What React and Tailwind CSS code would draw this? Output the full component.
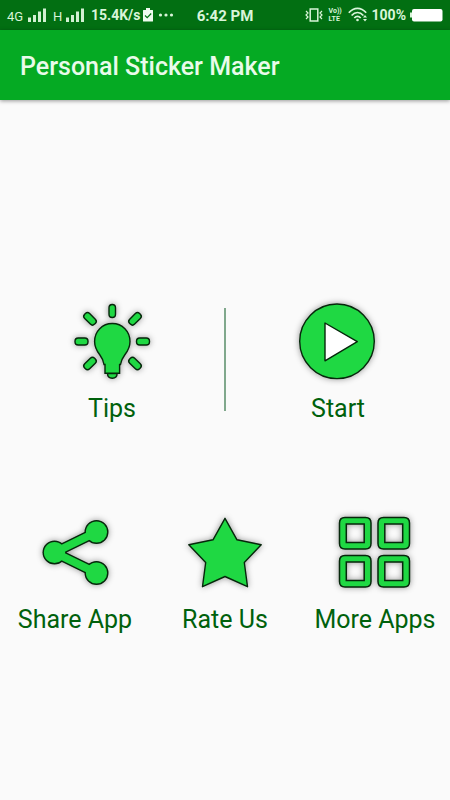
function SignalBars() {
  return (
    <svg className="h-4 w-5" viewBox="0 0 20 16" fill="#d2f0d2">
      <rect x="1" y="10.500" width="3" height="4.500" />
      <rect x="6" y="8" width="3" height="7" />
      <rect x="11" y="4.500" width="3" height="10.500" />
      <rect x="16" y="1.500" width="3" height="13.500" />
    </svg>
  );
}

function StatusBar() {
  return (
    <div className="grid h-[30px] grid-cols-[1fr_auto_1fr] items-center bg-[#026f12] px-[7px] text-[#d9f5d9]">
      <div className="flex items-center">
        <span className="mt-1 w-5 text-[13px] leading-4">4G</span>
        <SignalBars />
        <span className="mt-1 ml-1.5 w-3 text-[13px] leading-4">H</span>
        <SignalBars />
        <span className="ml-1.5 text-sm leading-4 font-bold">15.4K/s</span>
        <svg className="ml-0.5 h-4 w-3" viewBox="0 0 12 16">
          <path d="M4 1h4v2h2.500a.5.5 0 0 1 .5.500v10.500a.5.5 0 0 1-.5.500h-9a.5.5 0 0 1-.5-.500V3.500a.5.5 0 0 1 .5-.500H4z" fill="#effbef" />
          <path d="M3 8.500l2.200 2.200L9.200 6.500" fill="none" stroke="#026f12" strokeWidth="1.200" />
        </svg>
        <svg className="ml-1 h-4 w-4" viewBox="0 0 16 16" fill="#d9f5d9">
          <circle cx="2.500" cy="8" r="1.600" />
          <circle cx="8" cy="8" r="1.600" />
          <circle cx="13.500" cy="8" r="1.600" />
        </svg>
      </div>

      <span className="mt-0.5 text-[15px] leading-4 font-bold">6:42 PM</span>

      <div className="flex items-center justify-end">
        {/* vibrate */}
        <svg className="h-4 w-[18px]" viewBox="0 0 18 16" fill="none" stroke="#d9f5d9">
          <rect x="5.200" y="2" width="7.600" height="12" strokeWidth="1.500" />
          <path d="M1 4l2 2-2 2 2 2-2 2M17 4l-2 2 2 2-2 2 2 2" strokeWidth="1.200" />
        </svg>
        <span className="ml-1.5 flex w-[15px] flex-col text-[7px] leading-2 font-bold">
          <span>Vo))</span>
          <span>LTE</span>
        </span>
        {/* wifi */}
        <svg className="ml-1 h-4 w-5" viewBox="0 0 20 16" fill="none" stroke="#d9f5d9" strokeWidth="1.700">
          <path d="M.8 5.800C6-.2 13-.2 18.200 5.800" />
          <path d="M3.600 8.500c3.500-4 8.300-4 11.800 0" />
          <path d="M6.300 11c2-2.300 4.400-2.300 6.400 0" />
          <circle cx="9.500" cy="13" r="1.300" fill="#d9f5d9" stroke="none" />
          <path d="M15 10.500l2-2.500 2 2.500zM15 12l2 2.500 2-2.500z" fill="#d9f5d9" stroke="none" />
        </svg>
        <span className="mx-1 text-sm leading-4 font-bold">100%</span>
        <svg className="h-4 w-[33px]" viewBox="0 0 33 16">
          <rect x="0" y="5.500" width="2" height="5" fill="#d9f5d9" />
          <rect x="2" y="2" width="30.500" height="12.500" rx="2" fill="#fff" />
        </svg>
      </div>
    </div>
  );
}

const iconClass = 'size-20 overflow-visible drop-shadow-[0_0_3px_rgba(0,0,0,0.4)]';

function TipsIcon() {
  return (
    <svg className={iconClass} viewBox="0 0 80 80" fill="#1fd843" stroke="#06270b" strokeWidth="1.400">
      <rect x="37" y="4.500" width="6.500" height="13" rx="3.200" />
      <rect x="3" y="38" width="13" height="7" rx="3.200" />
      <rect x="64.500" y="38" width="13" height="7" rx="3.200" />
      <rect x="11" y="15.300" width="14" height="7" rx="3" transform="rotate(45 18 18.800)" />
      <rect x="56" y="15.300" width="14" height="7" rx="3" transform="rotate(-45 63 18.800)" />
      <rect x="11" y="60" width="14" height="7" rx="3" transform="rotate(-45 18 63.500)" />
      <rect x="56" y="60" width="14" height="7" rx="3" transform="rotate(45 63 63.500)" />
      <path d="M35.500 73.500h9.600c0 3-2 4.700-4.800 4.700s-4.800-1.700-4.800-4.700z" />
      <path d="M40.300 23.500c10 0 17.700 7.800 17.700 18 0 6-2.400 9.800-5.300 13.500-2.500 3.300-3.700 6-4.200 9.500h-.9v8.800H33v-8.800h-1c-.5-3.500-1.600-6.200-4.100-9.500-2.900-3.700-5.300-7.500-5.300-13.500 0-10.200 7.700-18 17.700-18z" />
    </svg>
  );
}

function StartIcon() {
  return (
    <svg className={iconClass} viewBox="0 0 80 80" stroke="#06270b" strokeWidth="1.400" strokeLinejoin="round">
      <circle cx="39" cy="41.300" r="37.300" fill="#1fd843" />
      <path d="M27 23v37.800L59.300 41.700z" fill="#fff" />
    </svg>
  );
}

function ShareIcon() {
  return (
    <svg className={iconClass} viewBox="0 0 80 80" strokeLinecap="round">
      <g fill="#06270b" stroke="#06270b">
        <path d="M61.500 21L19.500 41.500l42 20.500" fill="none" strokeWidth="10.500" />
        <circle cx="61.500" cy="21" r="11.300" strokeWidth="1.400" />
        <circle cx="19.500" cy="41.500" r="11.300" strokeWidth="1.400" />
        <circle cx="61.500" cy="62" r="11.300" strokeWidth="1.400" />
      </g>
      <g fill="#1fd843">
        <path d="M61.500 21L19.500 41.500l42 20.500" fill="none" stroke="#1fd843" strokeWidth="7.700" />
        <circle cx="61.500" cy="21" r="10.600" />
        <circle cx="19.500" cy="41.500" r="10.600" />
        <circle cx="61.500" cy="62" r="10.600" />
      </g>
    </svg>
  );
}

function StarIcon() {
  return (
    <svg className={iconClass} viewBox="0 0 80 80" fill="#1fd843" stroke="#06270b" strokeWidth="1.400" strokeLinejoin="round">
      <path d="M40 7.300l12 21.500 24.200 5L59.300 51.500l3.200 24.200L40 65.500 17.500 75.700l3.200-24.200L3.800 33.800l24.200-5z" />
    </svg>
  );
}

function AppsIcon() {
  const corners = [[4.5, 6.5], [43, 6.5], [4.5, 44.5], [43, 44.5]];

  return (
    <svg className={iconClass} viewBox="0 0 80 80" fill="#1fd843" fillRule="evenodd" stroke="#06270b" strokeWidth="1.500">
      {corners.map(([x, y]) => (
        <path
          key={`${x}-${y}`}
          transform={`translate(${x} ${y})`}
          d="M5.500 0h20.500q5.500 0 5.500 5.500v20.500q0 5.500-5.500 5.500h-20.500q-5.500 0-5.500-5.500v-20.500q0-5.500 5.500-5.500zM6.800 6.500v18.500h17.900v-18.500z"
        />
      ))}
    </svg>
  );
}

function MenuButton({ icon, label }) {
  return (
    <button type="button" className="flex flex-col items-center gap-[13px] text-[25px] leading-8 whitespace-nowrap text-[#00610c]">
      {icon}
      <span>{label}</span>
    </button>
  );
}

function App() {
  return (
    <div className="min-h-screen bg-[#fafafa] font-[Roboto,sans-serif]">
      <StatusBar />
      <header className="flex h-[70px] items-center bg-[#05aa23] px-5 shadow-[0_1px_4px_rgba(0,0,0,0.4)]">
        <h1 className="mt-1 text-[25px] leading-8 font-medium text-[#e9fbea]">Personal Sticker Maker</h1>
      </header>

      <main className="pt-50">
        <div className="grid grid-cols-[1fr_2px_1fr]">
          <MenuButton icon={<TipsIcon />} label="Tips" />
          <div className="mt-2 h-[103px] bg-[#80a88c]" />
          <MenuButton icon={<StartIcon />} label="Start" />
        </div>
        <div className="mt-[86px] grid grid-cols-3">
          <MenuButton icon={<ShareIcon />} label="Share App" />
          <MenuButton icon={<StarIcon />} label="Rate Us" />
          <MenuButton icon={<AppsIcon />} label="More Apps" />
        </div>
      </main>
    </div>
  );
}

export default App;
